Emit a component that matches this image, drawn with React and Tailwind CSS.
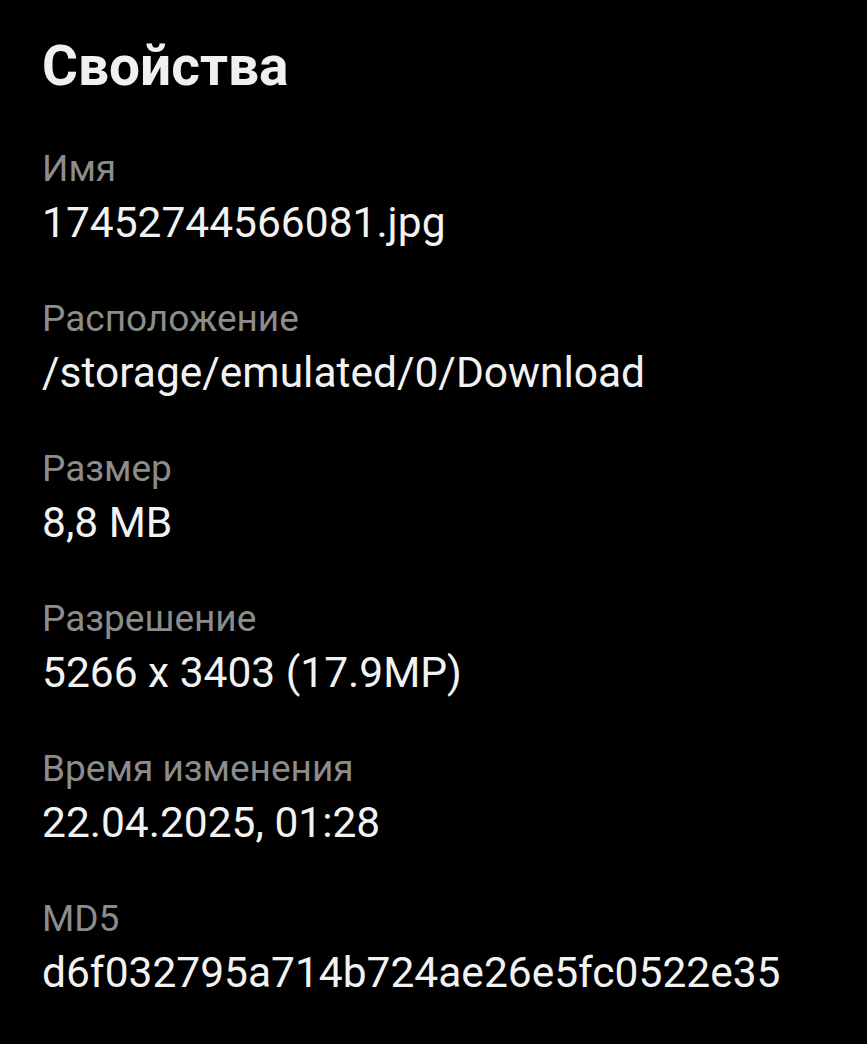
import React from 'react';

const props = [
  { label: 'Имя', value: '17452744566081.jpg' },
  { label: 'Расположение', value: '/storage/emulated/0/Download' },
  { label: 'Размер', value: '8,8 MB' },
  { label: 'Разрешение', value: '5266 x 3403 (17.9MP)' },
  { label: 'Время изменения', value: '22.04.2025, 01:28' },
  { label: 'MD5', value: 'd6f032795a714b724ae26e5fc0522e35' },
];

export default function App() {
  return (
    <div
      className="min-h-[1044px] w-full bg-black pl-[42px] pt-[34px]"
      style={{ fontFamily: 'Roboto, "Noto Sans", sans-serif' }}
    >
      {/* Title */}
      <h1 className="text-[55px] font-bold leading-[64px] text-[#f0f0f0]">Свойства</h1>

      {/* Property list */}
      <div className="mt-[49px] flex flex-col gap-[49px]">
        {props.map((p) => (
          <div key={p.label} className="flex flex-col">
            <span className="text-[37px] leading-[44px] text-[#8c8c8c]">{p.label}</span>
            <span className="mt-[7px] text-[42.5px] leading-[50px] text-[#f2f2f2]">{p.value}</span>
          </div>
        ))}
      </div>
    </div>
  );
}
